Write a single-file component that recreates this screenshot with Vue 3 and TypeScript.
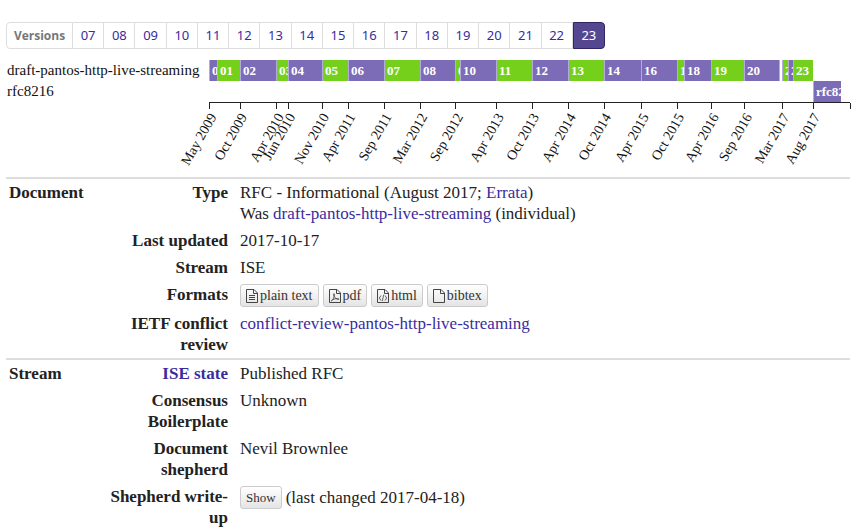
<script setup lang="ts">
interface Bar {
  label: string
  from: number
  to: number
  tone: 'violet' | 'green' | 'pale'
}

interface Tick {
  at: number
  label: string
}

const versions: string[] = Array.from({ length: 17 }, (_, i) => String(i + 7).padStart(2, '0'))
const current = '23'

// Timeline positions are measured on a scale of SPAN units.
const SPAN = 641

const draftBars: Bar[] = [
  { label: '00', from: 0, to: 8, tone: 'violet' },
  { label: '01', from: 8, to: 31, tone: 'green' },
  { label: '02', from: 31, to: 67, tone: 'violet' },
  { label: '03', from: 67, to: 79, tone: 'green' },
  { label: '04', from: 79, to: 113, tone: 'violet' },
  { label: '05', from: 113, to: 139, tone: 'green' },
  { label: '06', from: 139, to: 175, tone: 'violet' },
  { label: '07', from: 175, to: 211, tone: 'green' },
  { label: '08', from: 211, to: 246, tone: 'violet' },
  { label: '09', from: 246, to: 251, tone: 'green' },
  { label: '10', from: 251, to: 287, tone: 'violet' },
  { label: '11', from: 287, to: 323, tone: 'green' },
  { label: '12', from: 323, to: 359, tone: 'violet' },
  { label: '13', from: 359, to: 395, tone: 'green' },
  { label: '14', from: 395, to: 432, tone: 'violet' },
  { label: '16', from: 432, to: 468, tone: 'violet' },
  { label: '17', from: 468, to: 475, tone: 'green' },
  { label: '18', from: 475, to: 502, tone: 'violet' },
  { label: '19', from: 502, to: 535, tone: 'green' },
  { label: '20', from: 535, to: 570, tone: 'violet' },
  { label: '', from: 570, to: 571, tone: 'pale' },
  { label: '21', from: 573, to: 579, tone: 'green' },
  { label: '22', from: 579, to: 584, tone: 'violet' },
  { label: '23', from: 584, to: 604, tone: 'green' },
]

const rfcBars: Bar[] = [{ label: 'rfc8216', from: 604, to: 632, tone: 'violet' }]

const rows = [
  { name: 'draft-pantos-http-live-streaming', bars: draftBars },
  { name: 'rfc8216', bars: rfcBars },
]

const ticks: Tick[] = [
  { at: 0, label: 'May 2009' },
  { at: 31, label: 'Oct 2009' },
  { at: 67, label: 'Apr 2010' },
  { at: 79, label: 'Jun 2010' },
  { at: 113, label: 'Nov 2010' },
  { at: 139, label: 'Apr 2011' },
  { at: 175, label: 'Sep 2011' },
  { at: 211, label: 'Mar 2012' },
  { at: 246, label: 'Sep 2012' },
  { at: 287, label: 'Apr 2013' },
  { at: 323, label: 'Oct 2013' },
  { at: 359, label: 'Apr 2014' },
  { at: 395, label: 'Oct 2014' },
  { at: 432, label: 'Apr 2015' },
  { at: 468, label: 'Oct 2015' },
  { at: 502, label: 'Apr 2016' },
  { at: 535, label: 'Sep 2016' },
  { at: 573, label: 'Mar 2017' },
  { at: 604, label: 'Aug 2017' },
  { at: 641, label: '' },
]

const formats = [
  { name: 'plain text', icon: 'text' },
  { name: 'pdf', icon: 'pdf' },
  { name: 'html', icon: 'code' },
  { name: 'bibtex', icon: 'blank' },
]

const pct = (n: number): string => `${(n / SPAN) * 100}%`
</script>

<template>
  <main class="page">
    <nav class="versions">
      <span class="cell title">Versions</span>
      <a v-for="v in versions" :key="v" href="#" class="cell" :class="{ active: v === current }">{{ v }}</a>
    </nav>

    <section class="timeline">
      <div v-for="row in rows" :key="row.name" class="lane">
        <div class="lane-name">{{ row.name }}</div>
        <div class="track">
          <div
            v-for="b in row.bars"
            :key="b.from"
            class="bar"
            :class="b.tone"
            :style="{ left: pct(b.from), width: pct(b.to - b.from) }"
          >{{ b.label }}</div>
        </div>
      </div>
      <div class="lane">
        <div class="lane-name"></div>
        <div class="axis">
          <div v-for="t in ticks" :key="t.at" class="tick" :style="{ left: pct(t.at) }">
            <span class="tick-label">{{ t.label }}</span>
          </div>
        </div>
      </div>
    </section>

    <table class="meta">
      <colgroup>
        <col class="col-group" />
        <col class="col-name" />
        <col />
      </colgroup>
      <tbody>
        <tr>
          <th class="group">Document</th>
          <th>Type</th>
          <td>
            RFC - Informational (August 2017; <a href="#">Errata</a>)<br />
            Was <a href="#">draft-pantos-http-live-streaming</a> (individual)
          </td>
        </tr>
        <tr>
          <th></th>
          <th>Last updated</th>
          <td>2017-10-17</td>
        </tr>
        <tr>
          <th></th>
          <th>Stream</th>
          <td>ISE</td>
        </tr>
        <tr>
          <th></th>
          <th>Formats</th>
          <td>
            <div class="line">
              <a v-for="f in formats" :key="f.name" href="#" class="btn">
                <svg class="icon" viewBox="0 0 12 14" width="12" height="14" aria-hidden="true">
                  <path d="M.5.5h7.500l3.500 3.500v9.500H.5zM7.500.5v4h4" />
                  <path v-if="f.icon === 'text'" d="M3 6.500h6M3 8.500h6M3 10.500h6" />
                  <path
                    v-else-if="f.icon === 'pdf'"
                    class="fine"
                    d="M2.300 12c1.500-.8 3.500-4.500 3.200-6.800-.1-.8-1-.7-1 .1 0 2.200 2 4.500 4.500 5.200 1.300.2 1.200-1-.2-1-2.200-.1-5 .7-6.500 2.500z"
                  />
                  <path v-else-if="f.icon === 'code'" class="fine" d="M4 6.500L2.300 9 4 11.500M8 6.500L9.700 9 8 11.500M6.700 5.800l-1.400 6.200" />
                </svg>
                {{ f.name }}
              </a>
            </div>
          </td>
        </tr>
        <tr>
          <th></th>
          <th>IETF conflict review</th>
          <td><a href="#">conflict-review-pantos-http-live-streaming</a></td>
        </tr>
      </tbody>
      <tbody>
        <tr>
          <th class="group">Stream</th>
          <th><a href="#">ISE state</a></th>
          <td>Published RFC</td>
        </tr>
        <tr>
          <th></th>
          <th>Consensus Boilerplate</th>
          <td>Unknown</td>
        </tr>
        <tr>
          <th></th>
          <th>Document shepherd</th>
          <td>Nevil Brownlee</td>
        </tr>
        <tr>
          <th></th>
          <th>Shepherd write-up</th>
          <td>
            <div class="line">
              <button type="button" class="btn small">Show</button>
              <span>(last changed 2017-04-18)</span>
            </div>
          </td>
        </tr>
      </tbody>
    </table>
  </main>
</template>

<style>
body {
  background: #fff;
  overflow: hidden;
}
</style>

<style scoped>
.page {
  padding: 22px 14px 0 6px;
  font-family: "Liberation Serif", serif;
  font-size: 17px;
  line-height: 21px;
  color: #222;
}

a {
  color: #3a2c9e;
  text-decoration: none;
}

.versions {
  display: flex;
  max-width: 599px;
  font-family: "Noto Sans", sans-serif;
  font-size: 13px;
  line-height: 25px;
}

.cell {
  flex: 1 1 0;
  box-sizing: border-box;
  border: 1px solid #ddd;
  border-left-width: 0;
  text-align: center;
}

.cell.title {
  flex: 0 0 67px;
  border-left-width: 1px;
  border-radius: 4px 0 0 4px;
  font-family: "Open Sans", sans-serif;
  font-size: 12px;
  font-weight: 700;
  color: #777;
}

.cell.active {
  border: 1px solid #2f2663;
  border-radius: 0 4px 4px 0;
  background: #54478f;
  color: #fff;
}

.timeline {
  padding-top: 11px;
  font-size: 15px;
  color: #111;
}

.lane {
  display: flex;
}

.lane-name {
  flex: 0 0 203px;
  box-sizing: border-box;
  padding-left: 1px;
  white-space: nowrap;
}

.track {
  position: relative;
  flex: 1;
  height: 21px;
}

.bar {
  position: absolute;
  top: 0;
  box-sizing: border-box;
  height: 21px;
  padding-left: 2px;
  border-left: 1px solid #b5abda;
  overflow: hidden;
  font-size: 13px;
  font-weight: 700;
  color: #fff;
}

.bar.violet {
  background: #7c6bb7;
}

.bar.green {
  background: #75d01c;
}

.bar.pale {
  padding: 0;
  background: #c9c2e3;
}

.axis {
  position: relative;
  flex: 1;
  height: 75px;
  box-sizing: border-box;
  border-top: 1px solid #222;
}

.tick {
  position: absolute;
  top: 0;
  width: 1px;
  height: 6px;
  background: #222;
}

.tick-label {
  position: absolute;
  top: 1px;
  right: -3px;
  transform: rotate(-60deg);
  transform-origin: right center;
  font-size: 14px;
  white-space: nowrap;
}

.meta {
  width: 100%;
  table-layout: fixed;
  border-spacing: 0;
}

.col-group {
  width: 96px;
}

.col-name {
  width: 129px;
}

th,
td {
  padding: 3px;
  vertical-align: top;
}

th {
  text-align: right;
  font-weight: 700;
}

th.group {
  text-align: left;
}

td {
  padding-left: 9px;
}

tbody tr:first-child > * {
  border-top: 2px solid #ddd;
}

.line {
  display: flex;
  align-items: center;
  gap: 4px;
}

.btn {
  display: inline-flex;
  align-items: center;
  gap: 2px;
  box-sizing: border-box;
  height: 23px;
  padding: 0 5px;
  border: 1px solid #ccc;
  border-radius: 3px;
  background: linear-gradient(#fff, #e4e4e4);
  font-family: inherit;
  font-size: 14px;
  line-height: 21px;
  color: #333;
}

.btn.small {
  font-size: 13px;
}

.icon {
  fill: none;
  stroke: #444;
  stroke-width: 1;
}

.fine {
  stroke-width: 0.8;
}
</style>
